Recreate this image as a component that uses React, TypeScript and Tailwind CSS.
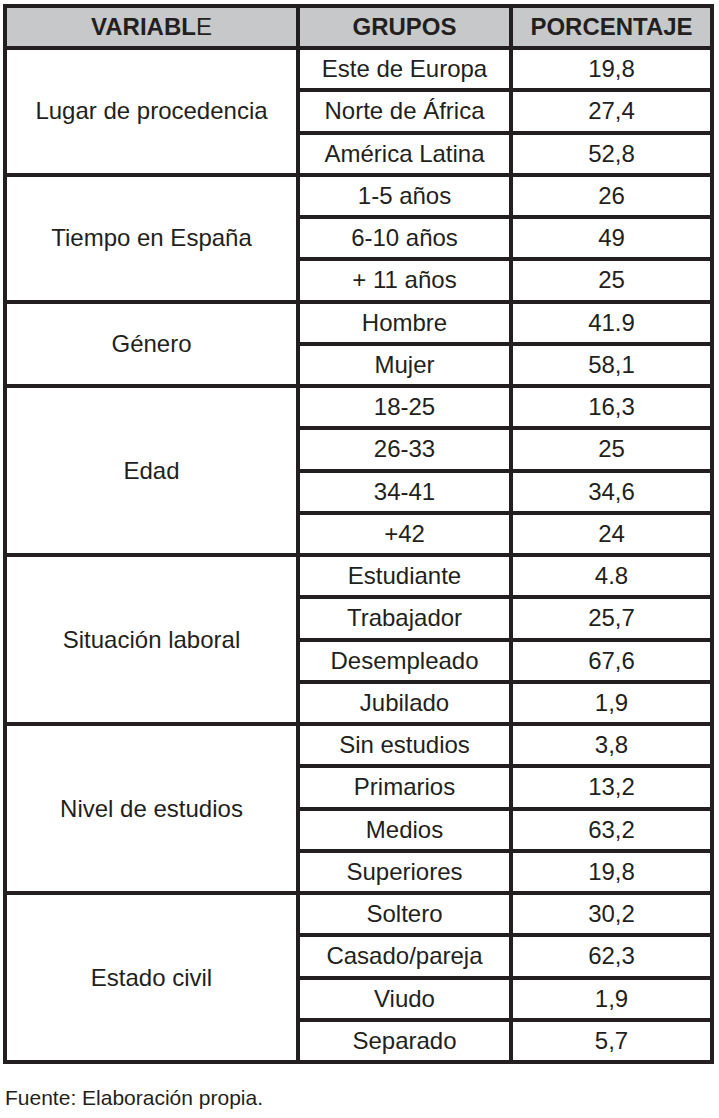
import React from "react";

type Group = { variable: string; span: string; rows: [string, string][] };

const groups: Group[] = [
  {
    variable: "Lugar de procedencia",
    span: "row-span-3",
    rows: [
      ["Este de Europa", "19,8"],
      ["Norte de África", "27,4"],
      ["América Latina", "52,8"],
    ],
  },
  {
    variable: "Tiempo en España",
    span: "row-span-3",
    rows: [
      ["1-5 años", "26"],
      ["6-10 años", "49"],
      ["+ 11 años", "25"],
    ],
  },
  {
    variable: "Género",
    span: "row-span-2",
    rows: [
      ["Hombre", "41.9"],
      ["Mujer", "58,1"],
    ],
  },
  {
    variable: "Edad",
    span: "row-span-4",
    rows: [
      ["18-25", "16,3"],
      ["26-33", "25"],
      ["34-41", "34,6"],
      ["+42", "24"],
    ],
  },
  {
    variable: "Situación laboral",
    span: "row-span-4",
    rows: [
      ["Estudiante", "4.8"],
      ["Trabajador", "25,7"],
      ["Desempleado", "67,6"],
      ["Jubilado", "1,9"],
    ],
  },
  {
    variable: "Nivel de estudios",
    span: "row-span-4",
    rows: [
      ["Sin estudios", "3,8"],
      ["Primarios", "13,2"],
      ["Medios", "63,2"],
      ["Superiores", "19,8"],
    ],
  },
  {
    variable: "Estado civil",
    span: "row-span-4",
    rows: [
      ["Soltero", "30,2"],
      ["Casado/pareja", "62,3"],
      ["Viudo", "1,9"],
      ["Separado", "5,7"],
    ],
  },
];

const cell = "bg-white flex items-center justify-center leading-none";

export default function App() {
  return (
    <div className="bg-white w-[719px] min-h-[1118px] font-['Liberation_Sans',Arial,sans-serif] text-[#231f20]">
      <div className="pt-[4px] pl-[3px]">
        <div className="grid w-[711px] grid-cols-[289px_209px_197px] grid-rows-[38px_repeat(24,38.25px)] gap-[4px] p-[4px] bg-[#231f20] text-[24px]">
          <div className="bg-[#c7c8ca] flex items-center justify-center leading-none">
            <span className="font-bold">VARIABL</span>
            <span>E</span>
          </div>
          <div className="bg-[#c7c8ca] flex items-center justify-center leading-none font-bold">
            GRUPOS
          </div>
          <div className="bg-[#c7c8ca] flex items-center justify-center leading-none font-bold">
            PORCENTAJE
          </div>
          {groups.map((g) => (
            <React.Fragment key={g.variable}>
              <div className={`${cell} col-start-1 ${g.span}`}>{g.variable}</div>
              {g.rows.map(([name, pct]) => (
                <React.Fragment key={name}>
                  <div className={`${cell} col-start-2`}>{name}</div>
                  <div className={`${cell} col-start-3`}>{pct}</div>
                </React.Fragment>
              ))}
            </React.Fragment>
          ))}
        </div>
      </div>
      <div className="mt-[22px] pl-[5px] text-[21px] leading-[24px]">
        Fuente: Elaboración propia.
      </div>
    </div>
  );
}
